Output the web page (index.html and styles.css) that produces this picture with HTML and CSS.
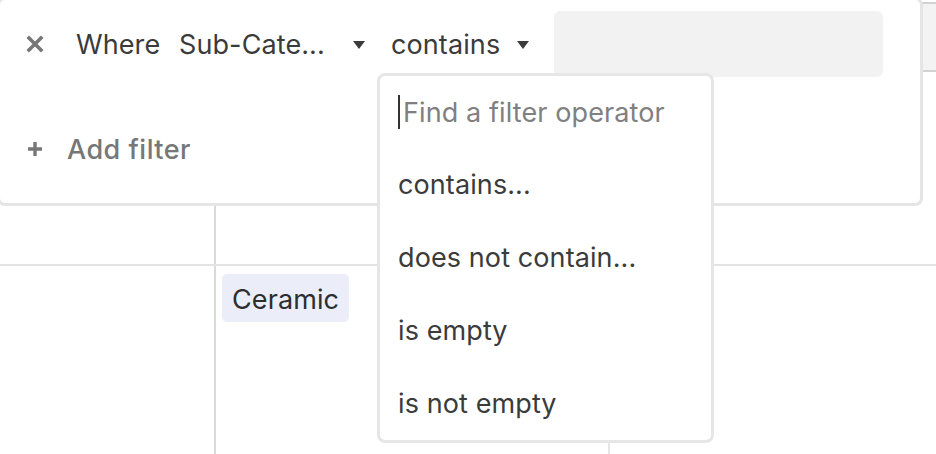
FILE: index.html
```html
<!DOCTYPE html>
<html>

<head>

	<title>Filter operator menu</title>

	<link rel="stylesheet" href="styles.css">
</head>

<body>

	<!-- grid behind the filter popover -->
	<div class="sheet">
		<div class="sheetHeader"></div>
		<div class="sheetRow first">
			<div class="cell primary"></div>
			<div class="cell wide"></div>
			<div class="cell"></div>
		</div>
		<div class="sheetRow">
			<div class="cell primary"></div>
			<div class="cell wide">
				<span class="tag">Ceramic</span>
			</div>
			<div class="cell"></div>
		</div>
	</div>

	<!-- filter popover -->
	<div class="filterPanel">
		<div class="filterRow">
			<button class="iconBtn" title="Remove filter">
				<svg width="18" height="18" viewBox="0 0 18 18">
					<path d="M3 3 L15 15 M15 3 L3 15" stroke="currentColor" stroke-width="3.6" stroke-linecap="square" fill="none"/>
				</svg>
			</button>
			<span class="conjunction">Where</span>
			<div class="select field">
				<span>Sub-Cate...</span>
				<span class="caret"></span>
			</div>
			<div class="select operator">
				<span>contains</span>
				<span class="caret"></span>
			</div>
			<div class="valueBox"></div>
		</div>
		<div class="addRow">
			<svg class="plus" width="18" height="18" viewBox="0 0 18 18">
				<path d="M9 2 V16 M2 9 H16" stroke="currentColor" stroke-width="3.4" fill="none"/>
			</svg>
			<span>Add filter</span>
		</div>
	</div>

	<!-- operator dropdown -->
	<div class="operatorMenu">
		<div class="menuSearch">
			<span class="textCursor"></span>
			<span class="placeholder">Find a filter operator</span>
		</div>
		<div class="menuItem">contains...</div>
		<div class="menuItem">does not contain...</div>
		<div class="menuItem">is empty</div>
		<div class="menuItem">is not empty</div>
	</div>

</body>

</html>
```

FILE: styles.css
```css
* {
	box-sizing: border-box;
}

html, body {
	margin: 0;
	width: 936px;
	height: 454px;
	overflow: hidden;
	background: #fff;
	font-family: 'Inter', 'Liberation Sans', sans-serif;
	font-size: 27px;
	letter-spacing: 0.1px;
	color: #3b3b3b;
}

/* background sheet */
.sheet {
	padding-top: 2px;
}

.sheetHeader {
	height: 70px;
	background: #f3f3f3;
	border-top: 2px solid #d2d2d2;
	border-bottom: 2px solid #d2d2d2;
}

.sheetRow {
	display: flex;
	height: 194px;
	border-bottom: 2px solid #e3e3e3;
}

.cell {
	flex: 1;
}
.cell.primary {
	flex: none;
	width: 216px;
	border-right: 2px solid #d9d9d9;
}
.cell.wide {
	flex: none;
	width: 394px;
	border-right: 2px solid #e6e6e6;
	padding: 8px 6px;
}

.tag {
	display: inline-block;
	height: 48px;
	line-height: 45px;
	padding: 3px 10px 0;
	border-radius: 5px;
	background: #ebedf8;
	color: #2e2e2e;
}

/* filter popover */
.filterPanel {
	position: absolute;
	left: -3px;
	top: -3px;
	width: 926px;
	height: 209px;
	background: #fff;
	border: 3px solid rgba(0, 0, 0, 0.1);
	border-radius: 8px;
	padding: 11px 0 0 26px;
}

.filterRow {
	display: flex;
	align-items: center;
	height: 66px;
}

.iconBtn {
	display: flex;
	border: none;
	background: none;
	padding: 0;
	color: #777;
}

.conjunction {
	margin-left: 32px;
	width: 103px;
}

.select {
	display: flex;
	align-items: center;
	justify-content: space-between;
}
.select.field {
	width: 186px;
}
.select.operator {
	margin-left: 26px;
	width: 138px;
}

.caret {
	width: 0;
	height: 0;
	border-left: 6px solid transparent;
	border-right: 6px solid transparent;
	border-top: 8px solid #3b3b3b;
	margin-top: 1px;
}

.valueBox {
	margin-left: 25px;
	width: 329px;
	height: 66px;
	background: #f2f2f2;
	border-radius: 6px;
}

.addRow {
	display: flex;
	align-items: center;
	height: 56px;
	margin-top: 44px;
	color: #777;
	font-weight: 500;
	letter-spacing: 0.5px;
}
.addRow .plus {
	margin-right: 23px;
}

/* operator dropdown */
.operatorMenu {
	position: absolute;
	left: 377px;
	top: 73px;
	width: 337px;
	height: 370px;
	background: #fff;
	border: 3px solid #e6e6e6;
	border-radius: 8px;
	padding-left: 18px;
}

.menuSearch {
	display: flex;
	align-items: center;
	height: 72px;
	color: #808080;
}

.textCursor {
	width: 2px;
	height: 34px;
	background: #333;
	margin-right: 3px;
}

.menuItem {
	display: flex;
	align-items: center;
	height: 73px;
	color: #3b3b3b;
}
```
